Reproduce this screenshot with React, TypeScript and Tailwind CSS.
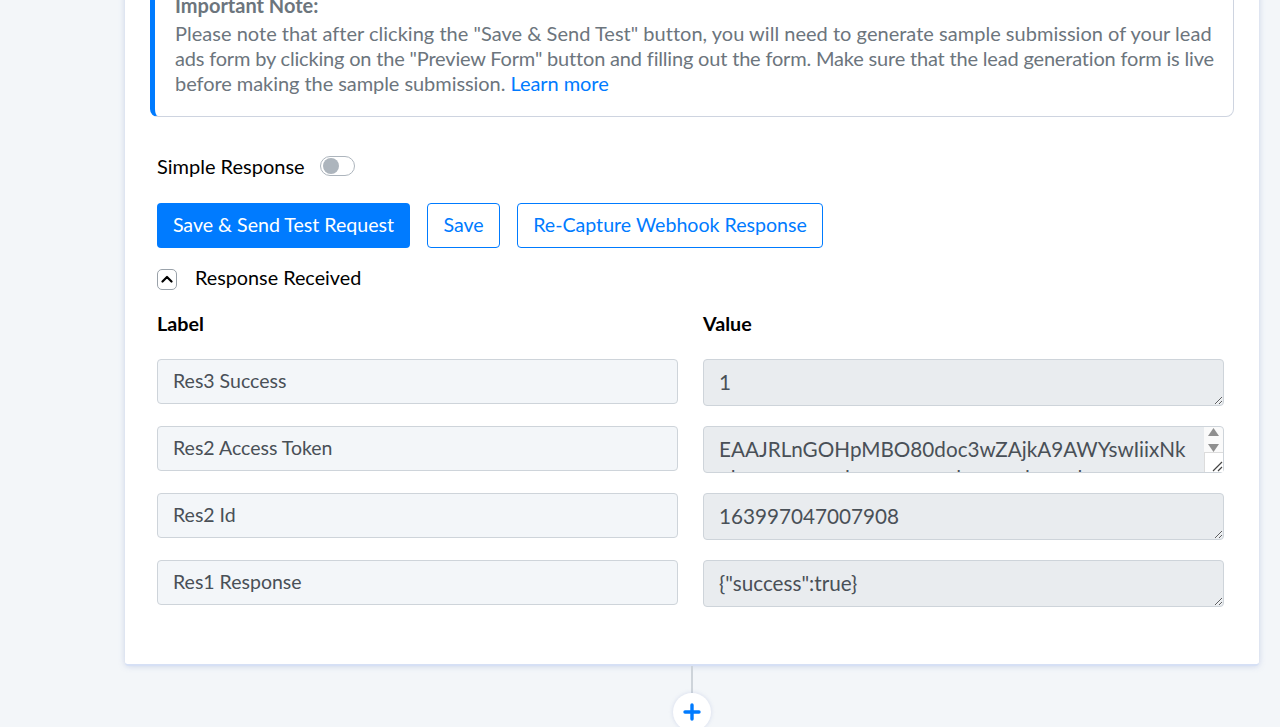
const font = { fontFamily: 'Lato, "Open Sans", sans-serif' };

const rows = [
  { label: 'Res3 Success', value: '1' },
  {
    label: 'Res2 Access Token',
    value: 'EAAJRLnGOHpMBO80doc3wZAjkA9AWYswIiixNk\nolwvmxzueonlzwxmoeusalxcvnoalsuewlzrnoxmcevaso',
    scroll: true,
  },
  { label: 'Res2 Id', value: '163997047007908' },
  { label: 'Res1 Response', value: '{"success":true}' },
];

// fake scrollbar, the headless browser doesn't paint the native one
function TextareaScrollbar() {
  return (
    <div className="absolute bottom-[1px] right-[1px] top-[1px] flex w-[19px] flex-col rounded-r-[4px] bg-[#fafafa]">
      <div className="flex h-[25px] flex-col items-center justify-center gap-[8px]">
        <svg width="11" height="8" viewBox="0 0 11 8" fill="#8f8f8f">
          <path d="M5.5 0l5.5 8H0z" />
        </svg>
        <svg width="11" height="8" viewBox="0 0 11 8" fill="#8f8f8f">
          <path d="M0 0h11L5.5 8z" />
        </svg>
      </div>
      <div className="flex flex-1 items-end justify-end border-l border-t border-[#dcdcdc] bg-white">
        <svg width="12" height="12" viewBox="0 0 12 12" fill="none" stroke="#444" strokeWidth="1.2">
          <path d="M2 11l9-9M7 11l4-4" />
        </svg>
      </div>
    </div>
  );
}

function ResponseRow({ label, value, scroll }: { label: string; value: string; scroll?: boolean }) {
  return (
    <div className="grid h-[67px] grid-cols-[521px_521px] gap-x-[25px]">
      <input
        readOnly
        value={label}
        className="h-[45px] w-full rounded-[4px] border border-[#ced4da] bg-[#f3f6f9] px-[15px] pb-[2px] text-[19.5px] text-[#495057] outline-none"
        style={font}
      />
      <div className="relative h-[47px]">
        <textarea
          readOnly
          wrap="off"
          value={value}
          className="h-[47px] w-full overflow-hidden rounded-[4px] border border-[#ced4da] bg-[#e9ecef] pb-[4px] pl-[15px] pr-[30px] pt-[7.5px] text-[20.7px] leading-[29px] text-[#495057] outline-none"
          style={font}
        />
        {scroll && <TextareaScrollbar />}
      </div>
    </div>
  );
}

export default function App() {
  return (
    <div className="h-[727px] overflow-hidden bg-[#f3f6f9] text-black" style={font}>
      <div className="ml-[125px] mt-[-20px] h-[686px] w-[1134px] rounded-[4px] border-b-2 border-[#d6e0f5] bg-white pl-[25px] pr-[25px] shadow-[0_0_6px_rgba(120,140,200,0.35)]">
        <div className="h-[137px] rounded-b-[8px] border border-l-[5px] border-[#ced4e0] border-l-[#007bff] bg-white pl-[20px] pt-[12px] text-[20px] leading-[25px] text-[#6c757d]">
          <p className="font-bold leading-[24px]">Important Note:</p>
          <p className="mt-[4px] whitespace-nowrap">
            <span className="block tracking-[0.02px]">Please note that after clicking the "Save &amp; Send Test" button, you will need to generate sample submission of your lead</span>
            <span className="block tracking-[-0.18px]">ads form by clicking on the "Preview Form" button and filling out the form. Make sure that the lead generation form is live</span>
            <span className="block tracking-[-0.06px]">before making the sample submission. <span className="text-[#007bff]">Learn more</span></span>
          </p>
        </div>

        <div className="pl-[7px] pr-[10px]">
          <div className="mt-[35px] flex items-center gap-[15px]">
            <span className="text-[20px] leading-[28px]">Simple Response</span>
            <span className="flex h-[20px] w-[35px] items-center rounded-full border border-[#adb5bd] bg-white pl-[2px]">
              <span className="h-[16px] w-[16px] rounded-full bg-[#adb5bd]" />
            </span>
          </div>

          <div className="mt-[23px] flex gap-[17px] text-[19.6px]">
            <button className="h-[45px] w-[253px] rounded-[4px] bg-[#007bff] pb-[2px] text-white">Save &amp; Send Test Request</button>
            <button className="h-[45px] w-[73px] rounded-[4px] border border-[#007bff] bg-white pb-[2px] text-[#007bff]">Save</button>
            <button className="h-[45px] w-[306px] rounded-[4px] border border-[#007bff] bg-white pb-[2px] text-[#007bff]">Re-Capture Webhook Response</button>
          </div>

          <div className="mt-[15px] flex items-center">
            <span className="mt-[4px] flex h-[21px] w-[20px] items-center justify-center rounded-[5px] border border-[#9aa2aa]">
              <svg width="12" height="8" viewBox="0 0 12 8" fill="none" stroke="#000" strokeWidth="2.2" strokeLinecap="round" strokeLinejoin="round">
                <path d="M1.5 6.5L6 2l4.5 4.5" />
              </svg>
            </span>
            <span className="ml-[18px] text-[19.8px] leading-[28px]">Response Received</span>
          </div>

          <div className="mt-[19px] grid grid-cols-[521px_521px] gap-x-[25px] text-[19.7px] font-bold leading-[28px]">
            <span>Label</span>
            <span>Value</span>
          </div>

          <div className="mt-[21px]">
            {rows.map((row) => (
              <ResponseRow key={row.label} label={row.label} value={row.value} scroll={row.scroll} />
            ))}
          </div>
        </div>
      </div>

      <div className="flex flex-col items-center">
        <div className="ml-[103px] h-[27px] w-[2px] bg-[#ced4da]" />
        <div className="ml-[103px] flex h-[38px] w-[38px] items-center justify-center rounded-full bg-white shadow-[0_0_4px_rgba(120,140,200,0.25)]">
          <svg width="18" height="18" viewBox="0 0 18 18" fill="none" stroke="#007bff" strokeWidth="3.4" strokeLinecap="round">
            <path d="M9 2v14M2 9h14" />
          </svg>
        </div>
      </div>
    </div>
  );
}
